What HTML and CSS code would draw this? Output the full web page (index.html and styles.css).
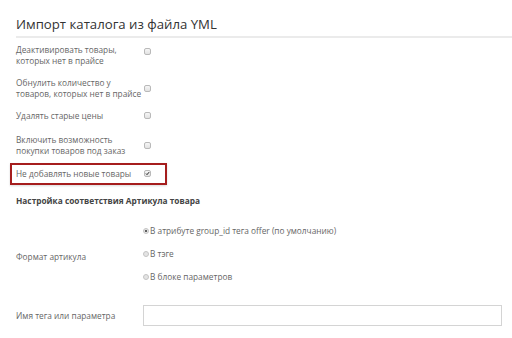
FILE: index.html
```html
<!DOCTYPE html>
<html lang="ru">
<head>
<meta charset="utf-8">
<link rel="stylesheet" href="styles.css">
</head>
<body>
<div class="page">
  <h1 class="title">Импорт каталога из файла YML</h1>
  <div class="form">
    <div class="row">
      <div class="label">Деактивировать товары,<br>которых нет в прайсе</div>
      <span class="cb cb-top"></span>
    </div>
    <div class="row">
      <div class="label">Обнулить количество у<br>товаров, которых нет в прайсе</div>
      <span class="cb"></span>
    </div>
    <div class="row row-single">
      <div class="label">Удалять старые цены</div>
      <span class="cb"></span>
    </div>
    <div class="row">
      <div class="label">Включить возможность<br>покупки товаров под заказ</div>
      <span class="cb"></span>
    </div>
    <div class="row row-hl">
      <div class="label">Не добавлять новые товары</div>
      <span class="cb cb-checked"><svg viewBox="0 0 8 8" width="7" height="7"><path d="M1.6 4.1 L3.2 5.8 L6.6 1.8" fill="none" stroke="#111" stroke-width="1.5"/></svg></span>
    </div>
    <div class="section">Настройка соответствия Артикула товара</div>
    <div class="row row-radio">
      <div class="label label-radio">Формат артикула</div>
      <div class="radios">
        <div class="radio-item"><span class="rb rb-on"></span>В атрибуте group_id тега offer (по умолчанию)</div>
        <div class="radio-item"><span class="rb"></span>В тэге</div>
        <div class="radio-item"><span class="rb"></span>В блоке параметров</div>
      </div>
    </div>
    <div class="row row-input">
      <div class="label">Имя тега или параметра</div>
      <div class="input"></div>
    </div>
  </div>
</div>
</body>
</html>
```

FILE: styles.css
```css
html, body {
  margin: 0;
  padding: 0;
  background: #fff;
}
body {
  font-family: "Open Sans", "Noto Sans", sans-serif;
  color: #666;
  font-size: 8.3px;
  line-height: 11px;
}
.page {
  padding-left: 16px;
}
.title {
  margin: 0;
  padding-top: 15px;
  padding-bottom: 3px;
  font-size: 13.2px;
  line-height: 18px;
  font-weight: 400;
  color: #333;
  border-bottom: 2px solid #ebebeb;
}
.form {
  padding-top: 6px;
  padding-right: 10px;
}
.row {
  display: grid;
  grid-template-columns: 128px 1fr;
  align-items: center;
  margin-bottom: 11px;
}
.row-single {
  margin-bottom: 13px;
}
.label {
  white-space: nowrap;
}
.cb {
  width: 7px;
  height: 7px;
  box-sizing: border-box;
  border: 1px solid #b9b9b9;
  border-radius: 2px;
  background: linear-gradient(#f6f6f6, #e2e2e2);
  display: flex;
  align-items: center;
  justify-content: center;
}
.cb-top {
  align-self: start;
  margin-top: 4px;
}
.cb-checked svg {
  display: block;
}
.row-hl {
  width: 157px;
  box-sizing: border-box;
  margin-left: -6px;
  margin-top: -4px;
  padding: 3px 0 4px 4px;
  border: 2px solid #a51d1d;
  grid-template-columns: 128px 7px;
  box-shadow: 0 1px 2px rgba(0,0,0,0.15);
  margin-bottom: 10px;
}
.section {
  font-weight: 700;
  color: #444;
  margin-bottom: 19px;
}
.row-radio {
  align-items: start;
  margin-bottom: 23px;
}
.label-radio {
  padding-top: 26px;
}
.radios {
  display: flex;
  flex-direction: column;
  gap: 12px;
  margin-left: -1px;
}
.radio-item {
  display: flex;
  align-items: center;
  gap: 1px;
}
.rb {
  width: 6px;
  height: 6px;
  box-sizing: border-box;
  border-radius: 50%;
  border: 1px solid #c4c4c4;
  background: #e4e4e4;
  position: relative;
}
.rb-on::after {
  content: "";
  position: absolute;
  left: 1px;
  top: 1px;
  width: 2px;
  height: 2px;
  border-radius: 50%;
  background: #333;
}
.input {
  height: 21px;
  box-sizing: border-box;
  border: 1px solid #d4d4d4;
  margin-left: -1px;
}
```
